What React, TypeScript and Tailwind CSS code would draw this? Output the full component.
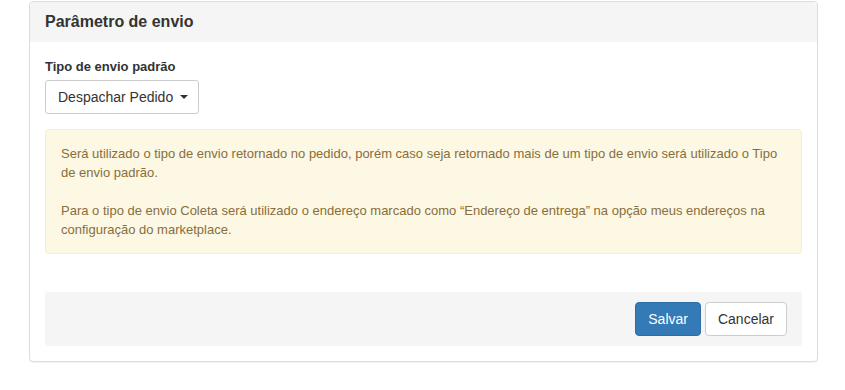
export default function App() {
  return (
    <div className="min-h-screen bg-white pl-[29px] pt-[1px] text-[#333] font-['Liberation_Sans',Arial,sans-serif]">
      <div className="w-[789px] rounded-[4px] border border-[#ddd] bg-white shadow-[0_1px_1px_rgba(0,0,0,0.05)]">
        <div className="flex h-[40px] items-center rounded-t-[3px] border-b border-[#f5f5f5] bg-[#f5f5f5] px-[15px]">
          <h3 className="text-[16px] font-bold leading-[18px] text-[#333]">Parâmetro de envio</h3>
        </div>
        <div className="p-[15px]">
          <label className="mb-[4px] block text-[13px] font-bold leading-[19px]">Tipo de envio padrão</label>
          <button
            type="button"
            className="flex h-[34px] items-center gap-[7px] whitespace-nowrap rounded-[3px] border border-[#ccc] bg-white pl-[12px] pr-[10px] text-[14px] leading-[20px] text-[#333]"
          >
            <span>Despachar Pedido</span>
            <span className="h-0 w-0 border-x-[4px] border-t-[4px] border-x-transparent border-t-[#333]" />
          </button>

          <div className="mt-[15px] rounded-[4px] border border-[#faebcc] bg-[#fcf8e3] px-[15px] py-[14px] text-[13px] leading-[19px] text-[#8a6d3b]">
            <p>
              Será utilizado o tipo de envio retornado no pedido, porém caso seja retornado mais de um tipo de envio será utilizado o Tipo de envio padrão.
            </p>
            <p className="mt-[19px]">
              Para o tipo de envio Coleta será utilizado o endereço marcado como “Endereço de entrega” na opção meus endereços na configuração do marketplace.
            </p>
          </div>

          <div className="mt-[38px] flex justify-end gap-[4px] rounded-[3px] bg-[#f5f5f5] px-[15px] py-[10px]">
            <button
              type="button"
              className="h-[34px] rounded-[4px] border border-[#2e6da4] bg-[#337ab7] px-[12px] text-[14px] text-white"
            >
              Salvar
            </button>
            <button
              type="button"
              className="h-[34px] rounded-[4px] border border-[#ccc] bg-white px-[12px] text-[14px] text-[#333]"
            >
              Cancelar
            </button>
          </div>
        </div>
      </div>
    </div>
  );
}
